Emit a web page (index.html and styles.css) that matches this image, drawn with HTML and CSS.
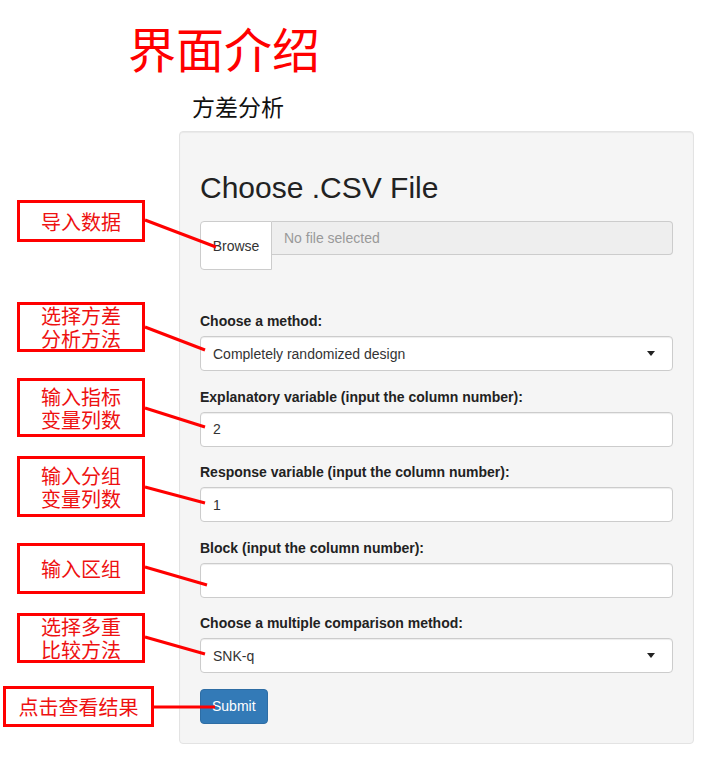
FILE: index.html
```html
<!DOCTYPE html>
<html lang="zh">
<head>
<meta charset="utf-8">
<title>界面介绍</title>
<link rel="stylesheet" href="styles.css">
</head>
<body>
<div class="page">
  <header class="header">
    <h1 class="title">界面介绍</h1>
    <div class="subtitle">方差分析</div>
  </header>

  <section class="well">
    <h3 class="well-title">Choose .CSV File</h3>
    <div class="file-group">
      <span class="btn-browse">Browse</span>
      <span class="file-field">No file selected</span>
    </div>

    <div class="form-group">
      <label class="control-label">Choose a method:</label>
      <div class="select-box"><span>Completely randomized design</span><i class="caret"></i></div>
    </div>
    <div class="form-group">
      <label class="control-label">Explanatory variable (input the column number):</label>
      <div class="text-box">2</div>
    </div>
    <div class="form-group">
      <label class="control-label">Response variable (input the column number):</label>
      <div class="text-box">1</div>
    </div>
    <div class="form-group">
      <label class="control-label">Block (input the column number):</label>
      <div class="text-box"></div>
    </div>
    <div class="form-group">
      <label class="control-label">Choose a multiple comparison method:</label>
      <div class="select-box"><span>SNK-q</span><i class="caret"></i></div>
    </div>
    <button class="btn-submit" type="button">Submit</button>
  </section>

  <div class="note a1">导入数据</div>
  <div class="note a2">选择方差<br>分析方法</div>
  <div class="note a3">输入指标<br>变量列数</div>
  <div class="note a4">输入分组<br>变量列数</div>
  <div class="note a5">输入区组</div>
  <div class="note a6">选择多重<br>比较方法</div>
  <div class="note a7">点击查看结果</div>

  <svg class="leaders" width="709" height="763" viewBox="0 0 709 763">
    <g stroke="#ff0000" stroke-width="3" stroke-linecap="butt">
      <line x1="145" y1="220" x2="216" y2="247"/>
      <line x1="145" y1="327" x2="205" y2="350"/>
      <line x1="145" y1="408" x2="205" y2="427"/>
      <line x1="145" y1="487" x2="205" y2="503"/>
      <line x1="145" y1="567" x2="207" y2="585"/>
      <line x1="145" y1="637" x2="205" y2="654"/>
      <line x1="154" y1="707" x2="215" y2="707"/>
    </g>
  </svg>
</div>
</body>
</html>
```

FILE: styles.css
```css
html, body {
  margin: 0;
  padding: 0;
  background: #ffffff;
}

.page {
  position: relative;
  width: 709px;
  height: 763px;
  overflow: hidden;
  font-family: "Liberation Sans", Arial, sans-serif;
  color: #333333;
}

.header {
  padding: 23px 0 0 128px;
}

.title {
  margin: 0;
  font-family: "Noto Sans CJK SC", sans-serif;
  font-weight: 400;
  font-size: 48px;
  line-height: 48px;
  color: #ff0000;
}

.subtitle {
  margin: 23px 0 0 64px;
  font-family: "Noto Sans CJK SC", sans-serif;
  font-size: 23px;
  line-height: 24px;
  color: #111111;
}

.well {
  box-sizing: border-box;
  width: 515px;
  margin: 13px 0 0 179px;
  padding: 19px 20px 19px 20px;
  background: #f5f5f5;
  border: 1px solid #e3e3e3;
  border-radius: 4px;
  box-shadow: inset 0 1px 1px rgba(0, 0, 0, 0.05);
}

.well-title {
  margin: 20px 0 17px;
  font-size: 30px;
  font-weight: normal;
  line-height: 33px;
  color: #222222;
}

.file-group {
  display: flex;
  align-items: flex-start;
  margin-bottom: 41px;
}

.btn-browse {
  box-sizing: border-box;
  width: 72px;
  height: 49px;
  display: flex;
  align-items: center;
  justify-content: center;
  background: #ffffff;
  border: 1px solid #cccccc;
  border-radius: 4px 0 0 4px;
  font-size: 14px;
  color: #333333;
}

.file-field {
  box-sizing: border-box;
  flex: 1;
  height: 34px;
  display: flex;
  align-items: center;
  padding: 0 12px;
  background: #eeeeee;
  border: 1px solid #cccccc;
  border-left: none;
  border-radius: 0 4px 4px 0;
  font-size: 14px;
  color: #999999;
}

.form-group {
  margin-bottom: 15.5px;
}

.control-label {
  display: block;
  margin-bottom: 5px;
  font-size: 14px;
  font-weight: bold;
  line-height: 20px;
  color: #222222;
}

.text-box,
.select-box {
  box-sizing: border-box;
  height: 35px;
  padding: 0 12px;
  display: flex;
  align-items: center;
  background: #ffffff;
  border: 1px solid #cccccc;
  border-radius: 4px;
  font-size: 14px;
  color: #333333;
  box-shadow: inset 0 1px 1px rgba(0, 0, 0, 0.075);
}

.select-box {
  justify-content: space-between;
  padding-right: 17px;
}

.caret {
  width: 0;
  height: 0;
  border-left: 4.5px solid transparent;
  border-right: 4.5px solid transparent;
  border-top: 5px solid #222222;
}

.btn-submit {
  display: block;
  box-sizing: border-box;
  height: 35px;
  padding: 0 11px;
  background: #337ab7;
  border: 1px solid #2e6da4;
  border-radius: 4px;
  color: #ffffff;
  font-family: "Liberation Sans", Arial, sans-serif;
  font-size: 14px;
}

.note {
  position: absolute;
  box-sizing: border-box;
  display: flex;
  align-items: center;
  justify-content: center;
  text-align: center;
  background: #ffffff;
  border: 3px solid #ff0000;
  font-family: "Noto Sans CJK SC", sans-serif;
  font-size: 20px;
  line-height: 23px;
  color: #ee1111;
}

.a1 { left: 17px; top: 200px; width: 128px; height: 42px; }
.a2 { left: 17px; top: 302px; width: 128px; height: 50px; }
.a3 { left: 17px; top: 378px; width: 128px; height: 59px; }
.a4 { left: 17px; top: 456px; width: 128px; height: 61px; }
.a5 { left: 17px; top: 543px; width: 128px; height: 51px; }
.a6 { left: 17px; top: 613px; width: 128px; height: 50px; }
.a7 { left: 3px; top: 686px; width: 151px; height: 41px; }

.leaders {
  position: absolute;
  left: 0;
  top: 0;
  pointer-events: none;
}
```
